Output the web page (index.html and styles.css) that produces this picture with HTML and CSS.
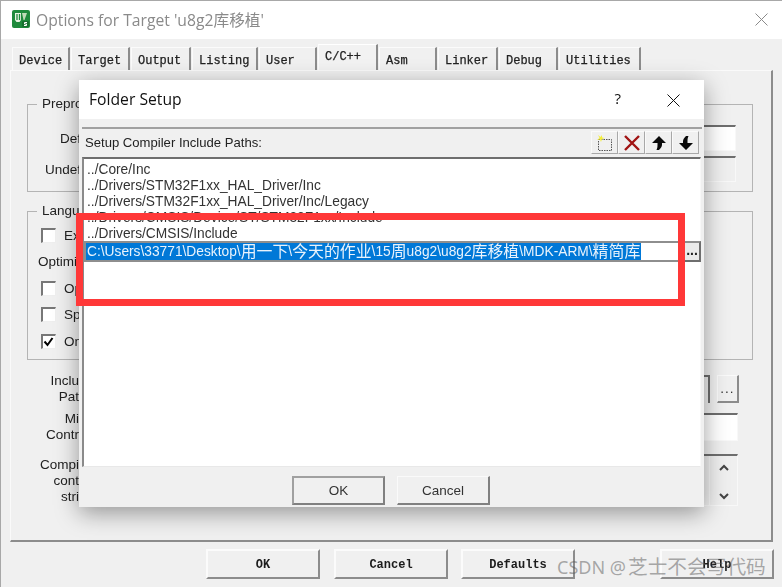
FILE: index.html
```html
<!DOCTYPE html>
<html lang="zh-CN">
<head>
<meta charset="utf-8">
<title>Options for Target</title>
<link rel="stylesheet" href="styles.css">
</head>
<body>
<div class="window">
  <header class="titlebar">
    <svg class="appicon" width="18" height="18" viewBox="0 0 18 18"><rect width="18" height="18" rx="2" fill="#1f8a3c"/><path d="M3 3h6v7l-1.500 2h-3L3 10z" fill="#e8f3e2"/><path d="M5 4v6M7.500 4v6" stroke="#1f8a3c" stroke-width="1.300"/><path d="M10 3h5l-2.500 7h-1z" fill="#bfdcb8"/><rect x="10" y="11" width="7" height="6" rx="1" fill="#17702f"/><path d="M15 12.500h-2.500v1.500h2v1.500H12" stroke="#fff" fill="none"/></svg>
    <span class="wintitle">Options for Target 'u8g2库移植'</span>
    <svg class="winclose" width="13" height="13" viewBox="0 0 13 13"><path d="M.5.500l12 12M12.500.500l-12 12" stroke="#8a8a8a" fill="none"/></svg>
  </header>
  <nav class="tabs">
    <span class="tab w58">Device</span>
    <span class="tab w59">Target</span>
    <span class="tab w60">Output</span>
    <span class="tab w66">Listing</span>
    <span class="tab w58">User</span>
    <span class="tab active w60">C/C++</span>
    <span class="tab w58">Asm</span>
    <span class="tab w60">Linker</span>
    <span class="tab w59">Debug</span>
    <span class="tab w82">Utilities</span>
  </nav>
  <main class="panel">
    <fieldset class="group prep">
      <legend>Prepro</legend>
      <div class="frow"><label class="lbl">Def</label><div class="field"></div></div>
      <div class="frow"><label class="lbl">Undef</label><div class="field off"></div></div>
    </fieldset>
    <fieldset class="group lang">
      <legend>Langu</legend>
      <div class="check first"><i class="box"></i>Ex</div>
      <div class="optlabel">Optimiz</div>
      <div class="check"><i class="box"></i>Op</div>
      <div class="check"><i class="box"></i>Sp</div>
      <div class="check"><i class="box"><svg width="13" height="13" viewBox="0 0 13 13"><path d="M2.500 6.500l3 3.500 5-7" stroke="#000" stroke-width="2" fill="none"/></svg></i>On</div>
    </fieldset>
    <div class="frow inc">
      <label class="lbl2">Inclu<br>Pat</label>
      <div class="incfield"><span class="vdots">⋮</span></div>
      <span class="dots">...</span>
    </div>
    <div class="frow misc">
      <label class="lbl2">Mi<br>Contr</label>
      <div class="field"></div>
    </div>
    <div class="frow comp">
      <label class="lbl2">Compi<br>cont<br>stri</label>
      <div class="field off compfield">
        <div class="spin">
          <svg width="12" height="8" viewBox="0 0 12 8"><path d="M2 6l4-4 4 4" stroke="#444" stroke-width="2" fill="none"/></svg>
          <svg width="12" height="8" viewBox="0 0 12 8"><path d="M2 2l4 4 4-4" stroke="#444" stroke-width="2" fill="none"/></svg>
        </div>
      </div>
    </div>
  </main>
  <footer class="actions">
    <button class="mbtn">OK</button>
    <button class="mbtn">Cancel</button>
    <button class="mbtn">Defaults</button>
    <button class="mbtn help">Help</button>
  </footer>
</div>

<section class="dialog">
  <header class="dtitle">
    <span>Folder Setup</span>
    <span class="dq">?</span>
    <svg class="dclose" width="13" height="13" viewBox="0 0 13 13"><path d="M.5.500l12 12M12.500.500l-12 12" stroke="#111" fill="none"/></svg>
  </header>
  <div class="dtool">
    <span>Setup Compiler Include Paths:</span>
    <div class="tbtns">
      <span class="tbtn"><svg width="18" height="18" viewBox="0 0 18 18"><rect x="2.500" y="5.500" width="13" height="11" fill="none" stroke="#555" stroke-dasharray="1.500 1"/><path d="M2 1l1.500 3L1 6l3-.5L5 8l1-3 3-1-3-.5L6 1 4.500 3z" fill="#f4ee3c"/></svg></span>
      <span class="tbtn"><svg width="18" height="18" viewBox="0 0 18 18"><path d="M2 2l14 14M16 2L2 16" stroke="#a11414" stroke-width="2.400" fill="none"/></svg></span>
      <span class="tbtn"><svg width="16" height="16" viewBox="0 0 16 16"><path d="M8 1l7 7h-4v1.500c0 2-1 3.500-3 5.500H5.500c.7-1.500 1-3 1-5V8H1z" fill="#0a0a0a"/></svg></span>
      <span class="tbtn"><svg width="16" height="16" viewBox="0 0 16 16"><path d="M8 15L1 8h4V6.500C5 4.500 6 3 8 1h2.500c-.7 1.500-1 3-1 5v2H15z" fill="#0a0a0a"/></svg></span>
    </div>
  </div>
  <div class="dlist">
    <div class="item">../Core/Inc</div>
    <div class="item">../Drivers/STM32F1xx_HAL_Driver/Inc</div>
    <div class="item">../Drivers/STM32F1xx_HAL_Driver/Inc/Legacy</div>
    <div class="item">../Drivers/CMSIS/Device/ST/STM32F1xx/Include</div>
    <div class="item">../Drivers/CMSIS/Include</div>
    <div class="edit">
      <div class="editbox"><span class="sel">C:\Users\33771\Desktop\<b>用一下</b>\<b>今天的作业</b>\15<b>周</b>u8g2\u8g2<b>库移植</b>\MDK-ARM\<b>精简库</b></span></div>
      <span class="browse">...</span>
    </div>
  </div>
  <footer class="dfoot">
    <button class="dbtn">OK</button>
    <button class="dbtn">Cancel</button>
  </footer>
</section>

<div class="redbox"></div>
<div class="mark">CSDN @<b>芝士不会写代码</b></div>
</body>
</html>
```
FILE: styles.css
```css
* { box-sizing: border-box; }
html, body { margin: 0; height: 100%; }
body {
  width: 782px; height: 587px; overflow: hidden; position: relative;
  background: #f0f0f0; font-family: "Liberation Sans", "Noto Sans CJK SC", sans-serif;
  font-size: 13.500px; color: #222;
}
.window {
  height: 587px; border-top: 1px solid #a8a8a8; border-left: 1px solid #a8a8a8;
  display: flex; flex-direction: column; background: #f0f0f0; filter: blur(.35px);
}
.titlebar {
  height: 38px; background: #fff; display: flex; align-items: center;
  padding: 0 14px 0 11px; flex: none;
}
.appicon { flex: none; margin-top: -2px; }
.wintitle {
  margin-left: 6px; margin-top: -2px; font: 15.700px "Open Sans", "Noto Sans CJK SC", sans-serif; color: #8a8a8a;
}
.winclose { margin-left: auto; margin-top: -1px; }
.tabs {
  display: flex; height: 32px; padding: 8px 0 0 11px; flex: none; gap: 1px;
}
.tab {
  height: 24px; padding: 6px 0 0 6px; font: 12px "Liberation Mono", monospace; color: #222;
  background: #f0f0f0; border-top: 1px solid #fbfbfb; border-left: 1px solid #fbfbfb;
  border-right: 2px solid #8c8c8c; -webkit-text-stroke: .25px #222;
}
.tab.active {
  height: 26px; margin-top: -3px; padding: 5px 0 0 6px; border-top: 1px solid #fff;
  background: #f2f2f2; position: relative;
}
.w58 { width: 58px; } .w59 { width: 59px; } .w60 { width: 60px; }
.w66 { width: 66px; } .w82 { width: 82px; }
.panel {
  margin-left: 9px; width: 763px; height: 472px; flex: none;
  border-top: 1px solid #fafafa; border-left: 1px solid #fafafa;
  border-right: 2px solid #8c8c8c; border-bottom: 2px solid #8c8c8c;
  padding: 25px 18px 0 16px; margin-top: -1px;
}
.group {
  margin: 0; padding: 0 16px 0 0; border: 1px solid #b4b4b4; border-top-width: 1px;
  min-width: 0;
}
.group legend { margin-left: 9px; padding: 0 5px; line-height: 16px; white-space: nowrap; }
.prep { height: 96px; }
.lang { height: 157px; margin-top: 11px; }
.frow { display: flex; align-items: center; }
.prep .frow { height: 26px; margin-top: 5px; }
.prep .frow:first-of-type { margin-top: 13px; }
.lbl { width: 75px; text-align: right; padding-right: 22px; flex: none; white-space: nowrap; }
.lbl2 { width: 69px; text-align: right; padding-right: 17px; flex: none; line-height: 16px; white-space: nowrap; }
.field { flex: 1; height: 100%; margin-left: 6px; background: #fff; border-top: 2px solid #6e6e6e; border-left: 2px solid #a0a0a0; border-right: 1px solid #f8f8f8; border-bottom: 1px solid #f8f8f8; }
.field.off { background: #efefef; }
.check { height: 14px; margin: 12.500px 0 0 13px; display: flex; align-items: center; white-space: nowrap; }
.check.first { margin-top: 9px; }
.box {
  width: 15px; height: 15px; margin-right: 8px; flex: none; background: #fff;
  border-top: 2px solid #777; border-left: 2px solid #777; border-right: 1px solid #eee; border-bottom: 1px solid #eee;
  display: block; font-style: normal;
}
.box svg { display: block; margin: -1px; }
.optlabel { margin: 12px 0 11px 10px; line-height: 16px; white-space: nowrap; }
.optlabel + .check { margin-top: 10px; }
.inc { height: 28px; margin-top: 15px; }
.incfield {
  flex: 1; height: 100%; margin: 0 7px 0 6px; border-top: 2px solid #6e6e6e; border-right: 2px solid #6e6e6e;
  text-align: right; font-size: 14px; line-height: 22px; color: #444; padding-right: 1px;
}
.vdots { font-family: "DejaVu Sans", sans-serif; font-weight: 700; }
.dots {
  width: 22px; height: 28px; flex: none; text-align: center; line-height: 26px; letter-spacing: 1px; color: #333;
  background: #f0f0f0; border-top: 1px solid #fafafa; border-left: 1px solid #fafafa; border-right: 2px solid #8c8c8c; border-bottom: 2px solid #8c8c8c;
  margin-right: 14px;
}
.misc { height: 28px; margin-top: 10px; padding-right: 15px; }
.comp { height: 52px; margin-top: 13px; padding-right: 15px; align-items: flex-start; }
.compfield { display: flex; justify-content: flex-end; }
.spin {
  width: 28px; display: flex; flex-direction: column; align-items: center; justify-content: space-between;
  padding: 8px 0 5px; border-left: 1px solid #f8f8f8;
}
.comp .lbl2 { margin-top: 3px; }
.actions { display: flex; padding: 7px 8px 0 205px; gap: 14px; }
.mbtn {
  width: 114px; height: 30px; padding: 1px 0 0; background: #f0f0f0; font: 700 12px "Liberation Mono", monospace; color: #1c1c1c;
  border: 0; border-top: 2px solid #fbfbfb; border-left: 2px solid #fbfbfb; border-right: 2px solid #8c8c8c; border-bottom: 2px solid #8c8c8c;
}
.mbtn:nth-child(2) { margin-right: -1px; }
.mbtn.help { margin-left: auto; }

.dialog {
  position: absolute; left: 79px; top: 80px; width: 625px; height: 427px;
  background: #f0f0f0; display: flex; flex-direction: column;
  box-shadow: 0 6px 22px rgba(0,0,0,.38);
}
.dialog > * { filter: blur(.3px); }
.dtitle {
  height: 39px; background: #fff; display: flex; align-items: center; padding: 0 24px 0 10px;
  font: 15.700px "Open Sans", "Noto Sans", sans-serif; color: #111; flex: none;
}
.dtitle > span:first-child { margin-top: -2px; }
.dq { margin-left: auto; font-size: 15px; margin-right: 46px; margin-top: -3px; }
.dclose { margin-top: 1px; }
.dtool {
  height: 27px; margin: 8px 2px 0 3px; border-top: 2px solid #a0a0a0; display: flex; align-items: center;
  padding-left: 3px; flex: none; padding-top: 2px; font-size: 13.100px;
}
.tbtns { margin-left: auto; display: flex; margin-right: 3px; margin-top: -1px; align-self: flex-end; }
.tbtn {
  width: 27px; height: 23px; display: flex; align-items: center; justify-content: center;
  border-top: 1px solid #fafafa; border-left: 1px solid #fafafa; border-right: 1px solid #a8a8a8; border-bottom: 1px solid #a8a8a8;
}
.dlist {
  margin: 3px 3px 0 3px; height: 310px; background: #fff; flex: none; font-size: 13.750px;
  border-top: 2px solid #6e6e6e; border-left: 2px solid #8a8a8a; padding: 3px 0 0 3px;
  border-right: 1px solid #f8f8f8; border-bottom: 1px solid #e8e8e8;
}
.item { height: 16px; line-height: 16px; white-space: nowrap; color: #333; }
.edit { display: flex; height: 21px; margin-left: -3px; margin-top: -1px; }
.editbox { flex: none; width: 601px; background: #fff; border: 2px solid #8e8e8e; border-right: 0; line-height: 17px; white-space: nowrap; }
.sel { display: inline-block; height: 17px; background: #0078d7; color: #e9f3fc; padding: 0 1px; }
.sel b { font-weight: 400; font-size: 15.900px; line-height: 17px; vertical-align: top; }
.browse {
  width: 16px; height: 21px; flex: none; background: #eaeaea; border-top: 2px solid #8e8e8e; border-right: 2px solid #6e6e6e; border-bottom: 2px solid #6e6e6e;
  font-weight: 700; line-height: 15px; text-align: center; color: #222; font-size: 14px;
}
.dfoot { display: flex; padding: 9px 0 0 213px; gap: 12px; }
.dbtn {
  width: 93px; height: 29px; padding: 0; background: #f0f0f0; font: 13.500px "Liberation Sans", sans-serif; color: #333;
  border: 0; border-top: 1px solid #fafafa; border-left: 1px solid #fafafa; border-right: 2px solid #808080; border-bottom: 2px solid #808080;
}
.dbtn:first-child { border: 2px solid #808080; border-top-color: #a0a0a0; border-left-color: #a0a0a0; }

.redbox { position: absolute; left: 76px; top: 213px; width: 609px; height: 93px; border: 7px solid #ff3838; }
.mark {
  position: absolute; left: 557px; top: 554px; font: 18px "Noto Sans", "Noto Sans CJK SC", sans-serif;
  color: rgba(90,90,90,.5); white-space: nowrap; line-height: 26px;
}
.mark b { font-weight: 400; font-size: 19.700px; margin-left: 2px; }
```
